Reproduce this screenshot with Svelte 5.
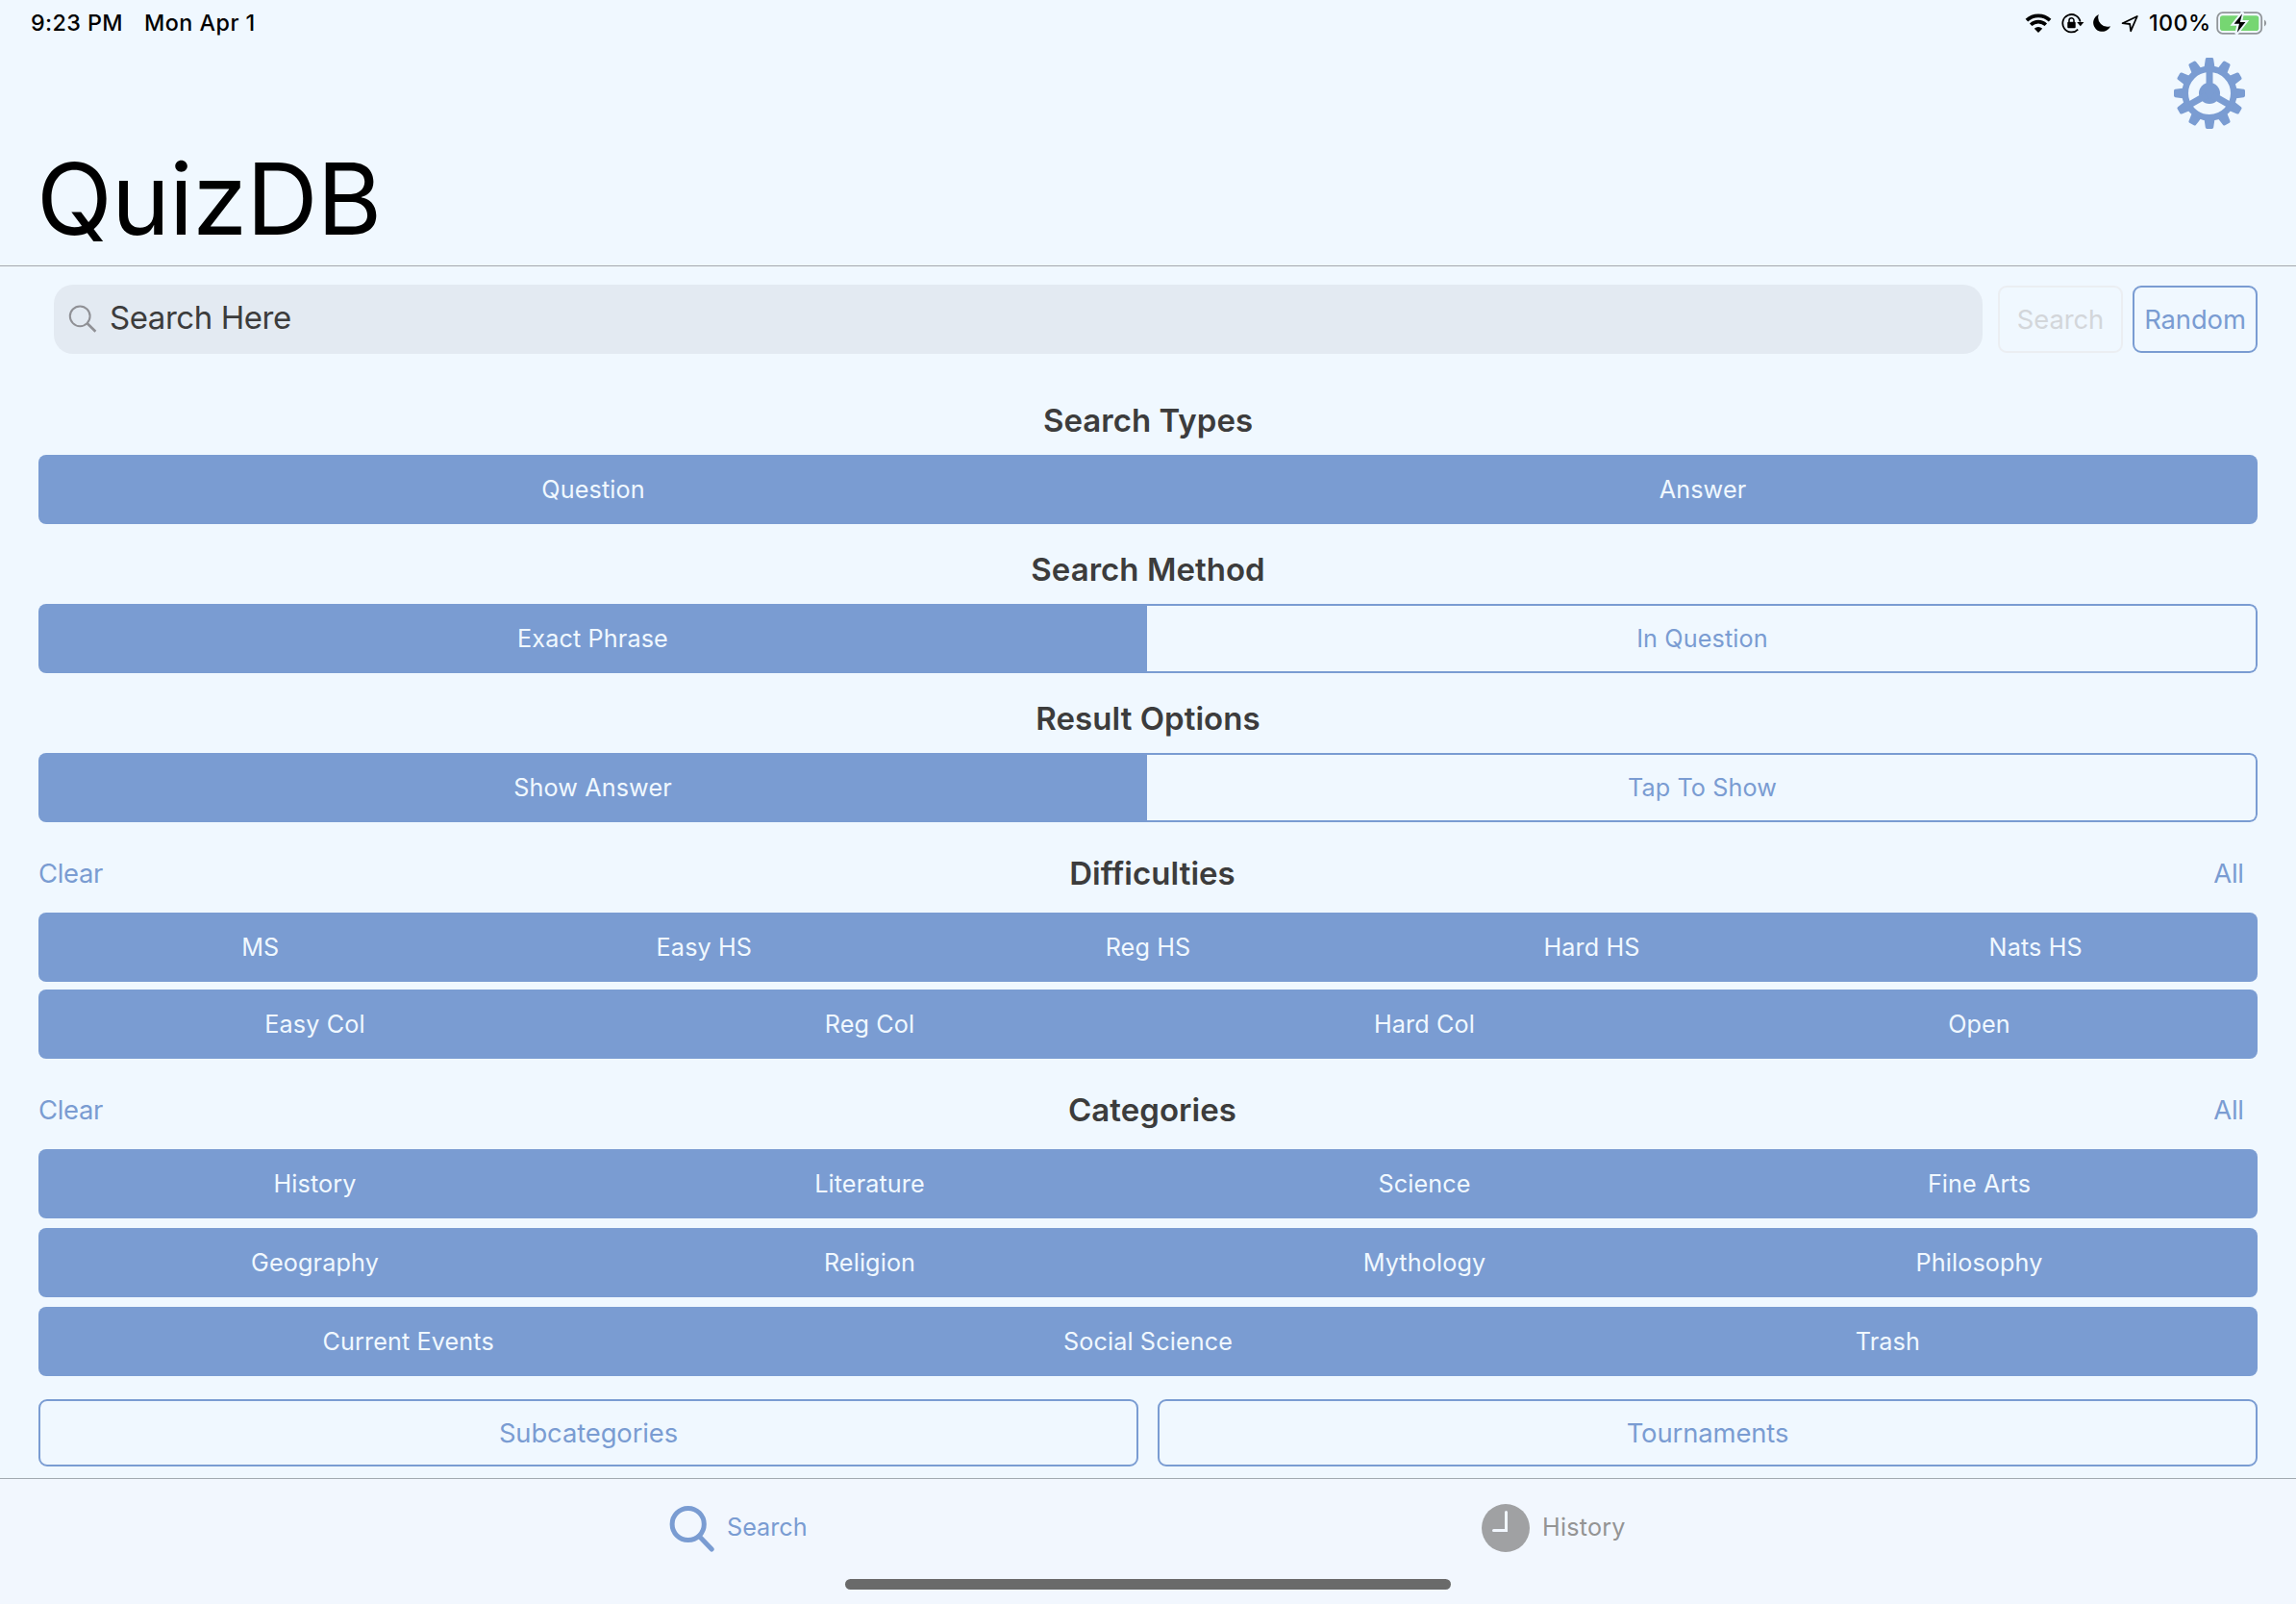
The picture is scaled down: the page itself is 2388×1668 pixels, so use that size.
<script>
  const sections = [
    { title: 'Search Types', rows: [['Question', 'Answer']], on: 2, kind: 'first' },
    { title: 'Search Method', rows: [['Exact Phrase', 'In Question']], on: 1, kind: 'plain' },
    { title: 'Result Options', rows: [['Show Answer', 'Tap To Show']], on: 1, kind: 'plain' },
    {
      title: 'Difficulties',
      rows: [
        ['MS', 'Easy HS', 'Reg HS', 'Hard HS', 'Nats HS'],
        ['Easy Col', 'Reg Col', 'Hard Col', 'Open']
      ],
      on: 9,
      kind: 'multi',
      gap: 8
    },
    {
      title: 'Categories',
      rows: [
        ['History', 'Literature', 'Science', 'Fine Arts'],
        ['Geography', 'Religion', 'Mythology', 'Philosophy'],
        ['Current Events', 'Social Science', 'Trash']
      ],
      on: 9,
      kind: 'multi',
      gap: 10
    }
  ];
  const teeth = Array.from({ length: 12 }, (_, i) => i * 30);
</script>

<div class="screen">
  <header>
    <div class="status">
      <span class="time">9:23 PM</span>
      <span class="date">Mon Apr 1</span>
      <svg class="wifi" width="28" height="22" viewBox="0 0 28 22" fill="none" stroke="#000">
        <path d="M1.9 8.1A17.7 17.7 0 0 1 26.1 8.1" stroke-width="3.8" />
        <path d="M6.2 12.7A11.4 11.4 0 0 1 21.8 12.7" stroke-width="3.6" />
        <path d="M14 21L9.8 16.7A6 6 0 0 1 18.2 16.7Z" fill="#000" stroke="none" />
      </svg>
      <svg class="lock" width="24" height="22" viewBox="0 0 24 22">
        <path d="M17.2 17.6A9.2 9.2 0 1 1 19.6 9.6" fill="none" stroke="#000" stroke-width="1.8" />
        <path d="M16.2 10H23.4L19.8 14.2Z" />
        <rect x="6.3" y="9.8" width="8.4" height="6.4" rx="1" />
        <path d="M8 10.5V8.2a2.5 2.5 0 0 1 5 0V10.5" fill="none" stroke="#000" stroke-width="1.5" />
      </svg>
      <svg class="moon" width="20" height="20" viewBox="0 0 20 20">
        <path d="M6.8 1A9.3 9.3 0 1 0 19 13.2A9.6 9.6 0 0 1 6.8 1Z" />
      </svg>
      <svg class="loc" width="20" height="20" viewBox="0 0 20 20" fill="none" stroke="#000" stroke-width="1.8" stroke-linejoin="round">
        <path d="M2.6 10.2L17.8 3L11.2 18.2L10.2 11Z" />
      </svg>
      <span class="pct">100%</span>
      <svg class="battery" width="54" height="26" viewBox="0 0 54 26">
        <rect x="1.2" y="2.2" width="46" height="21.6" rx="5.4" fill="none" stroke="#919599" stroke-width="1.8" />
        <rect x="4" y="5.2" width="40.3" height="15.8" rx="2.8" fill="#76d672" />
        <path d="M50 9.6a3.8 3.8 0 0 1 0 6.8Z" fill="#919599" />
        <path d="M27.6 1.8L17.6 14.2H23L20.8 24.6L31.2 11.6H25.6Z" stroke="#f0f8ff" stroke-width="3" fill="#f0f8ff" />
        <path d="M27 3.6L18.6 13.8H24L21.8 22.8L30.4 12H24.8Z" />
      </svg>
    </div>
    <div class="tools">
      <svg width="76" height="76" viewBox="-38 -38 76 76" fill="#7a9cd2">
        {#each teeth as a}
          <path d="M-5.6 -26L-4.2 -35.6Q-4 -37 -2.6 -37H2.6Q4 -37 4.2 -35.6L5.6 -26Z" transform="rotate({a})" />
        {/each}
        <circle r="25.3" fill="none" stroke="#7a9cd2" stroke-width="6.6" />
        <circle r="11" />
        {#each [0, 120, 240] as a}
          <rect x="-3.5" y="-24" width="7" height="20" transform="rotate({a})" />
        {/each}
      </svg>
    </div>
    <h1>QuizDB</h1>
  </header>

  <main>
    <div class="searchrow">
      <div class="field">
        <svg width="30" height="30" viewBox="0 0 30 30" fill="none" stroke="#8f9095">
          <circle cx="12.2" cy="11.8" r="10.4" stroke-width="2" />
          <path d="M19.7 19.3L28.4 27.8" stroke-width="2.6" />
        </svg>
        <span>Search Here</span>
      </div>
      <button class="btn off">Search</button>
      <button class="btn rnd">Random</button>
    </div>

    {#each sections as s}
      <div class="head {s.kind}">
        {#if s.kind === 'multi'}<span class="clear">Clear</span>{/if}
        <h2>{s.title}</h2>
        {#if s.kind === 'multi'}<span class="all">All</span>{/if}
      </div>
      <div class="rows" style="gap:{s.gap ?? 0}px">
        {#each s.rows as row}
          <div class="seg" class:four={row.length === 4}>
            {#each row as label, i}
              <span class={i < s.on ? 'on' : 'out'}>{label}</span>
            {/each}
          </div>
        {/each}
      </div>
    {/each}

    <div class="pair">
      <button class="btn">Subcategories</button>
      <button class="btn">Tournaments</button>
    </div>
  </main>

  <nav>
    <div class="tabs">
      <div class="tab search">
        <svg width="50" height="50" viewBox="0 0 50 50" fill="none" stroke="#7a9cd2" stroke-width="5">
          <circle cx="20.7" cy="21" r="16.6" />
          <path d="M32.2 33.6L45.2 47" stroke-linecap="round" />
        </svg>
        <span>Search</span>
      </div>
      <div class="tab history">
        <svg width="50" height="50" viewBox="0 0 50 50">
          <circle cx="25" cy="25" r="25" fill="#a0a1a3" />
          <path d="M25.5 8.5V27.6H12.5" fill="none" stroke="#f2f7fe" stroke-width="3" stroke-linecap="round" />
        </svg>
        <span>History</span>
      </div>
    </div>
    <div class="home"></div>
  </nav>
</div>

<style>
  :global(body) {
    background: #f0f8ff;
  }
  .screen {
    width: 2388px;
    height: 1668px;
    overflow: hidden;
    display: flex;
    flex-direction: column;
    background: #f0f8ff;
    font-family: Inter, 'Liberation Sans', sans-serif;
    color: #3c3c3c;
    white-space: nowrap;
  }
  header {
    height: 276px;
    border-bottom: 1px solid #a5a8ac;
    color: #000;
    display: flex;
    flex-direction: column;
    flex: none;
  }
  .status {
    height: 48px;
    display: flex;
    align-items: center;
    padding: 0 29px 0 32px;
    font-size: 23.3px;
    font-weight: 500;
    letter-spacing: 0.4px;
  }
  .time,
  .date,
  .pct {
    margin-top: -1px;
  }
  .date {
    margin-left: 22px;
    letter-spacing: 0.5px;
  }
  .wifi {
    margin-left: auto;
  }
  .lock {
    margin-left: 10px;
  }
  .moon {
    margin-left: 8px;
  }
  .loc {
    margin-left: 9px;
  }
  .pct {
    margin-left: 10px;
    width: 63px;
  }
  .battery {
    margin-left: 7px;
  }
  .tools {
    height: 98px;
    display: flex;
    justify-content: flex-end;
    padding: 11px 52px 0 0;
    box-sizing: border-box;
  }
  h1 {
    margin: 0;
    padding-left: 38px;
    font-size: 103px;
    line-height: 122px;
    font-weight: 430;
    letter-spacing: -0.8px;
  }
  main {
    flex: none;
    height: 1260px;
    box-sizing: border-box;
    padding: 19px 40px 0;
    display: flex;
    flex-direction: column;
  }
  .searchrow {
    display: flex;
    align-items: center;
    height: 72px;
    padding-left: 16px;
    margin-bottom: 33px;
  }
  .field {
    width: 2006px;
    height: 72px;
    border-radius: 20px;
    background: #e3eaf2;
    display: flex;
    align-items: center;
    margin-right: 16px;
    font-size: 33px;
  }
  .field svg {
    margin-left: 15px;
  }
  .field span {
    margin: -4px 0 0 13px;
    letter-spacing: -0.45px;
  }
  .btn {
    box-sizing: border-box;
    height: 70px;
    border: 2px solid #7a9cd2;
    border-radius: 9px;
    background: none;
    color: #7a9cd2;
    font: 400 27.4px Inter, sans-serif;
    letter-spacing: -0.1px;
    padding: 0;
    text-align: center;
  }
  .searchrow .btn {
    width: 130px;
  }
  .searchrow .off {
    color: #d3d6da;
    border-color: #ebeef2;
    margin-right: 10px;
  }
  .head {
    height: 83px;
    padding-top: 11px;
    box-sizing: border-box;
    display: flex;
    align-items: center;
    justify-content: center;
  }
  .head.first {
    height: 72px;
    padding-top: 0;
  }
  .head.multi {
    height: 94px;
    padding-top: 12px;
    display: grid;
    grid-template-columns: 69px 1fr 60px;
  }
  h2 {
    margin: 0;
    font-size: 33px;
    font-weight: 600;
    text-align: center;
    letter-spacing: 0.04px;
  }
  .clear,
  .all {
    font-size: 27.4px;
    letter-spacing: -0.3px;
    color: #7a9cd2;
  }
  .all {
    text-align: center;
  }
  .rows {
    display: flex;
    flex-direction: column;
  }
  .seg {
    height: 72px;
    border-radius: 8px;
    display: flex;
    overflow: hidden;
    font-size: 25.2px;
    color: #7a9cd2;
  }
  .seg span {
    flex: 1 1 100%;
    min-width: 0;
    box-sizing: border-box;
    display: flex;
    align-items: center;
    justify-content: center;
    letter-spacing: 0.12px;
  }
  .seg .on {
    background: #7a9cd2;
    color: #f0f8ff;
  }
  .seg.four .on {
    padding-right: 2px;
  }
  .seg .out {
    border: 2px solid #7a9cd2;
    border-left: none;
    padding-left: 2px;
    border-radius: 0 8px 8px 0;
  }
  .pair {
    display: grid;
    grid-template-columns: 1fr 1fr;
    gap: 20px;
    margin-top: 24px;
  }
  nav {
    flex: 1;
    border-top: 1px solid #a2aab1;
    background: #f2f7fe;
    display: flex;
    flex-direction: column;
    align-items: center;
  }
  .tabs {
    height: 102px;
    margin-bottom: 2px;
    width: 100%;
    display: flex;
    align-items: center;
    font-size: 25.2px;
  }
  .tab {
    display: flex;
    align-items: center;
    gap: 12px;
  }
  .tab span {
    margin-top: -2px;
  }
  .tab.search {
    margin-left: 695px;
    width: 846px;
    gap: 11px;
    color: #7a9cd2;
  }
  .tab.history {
    color: #949494;
    gap: 13px;
    letter-spacing: 0.2px;
  }
  .home {
    width: 630px;
    height: 11px;
    border-radius: 6px;
    background: #6a6a6a;
  }
</style>
